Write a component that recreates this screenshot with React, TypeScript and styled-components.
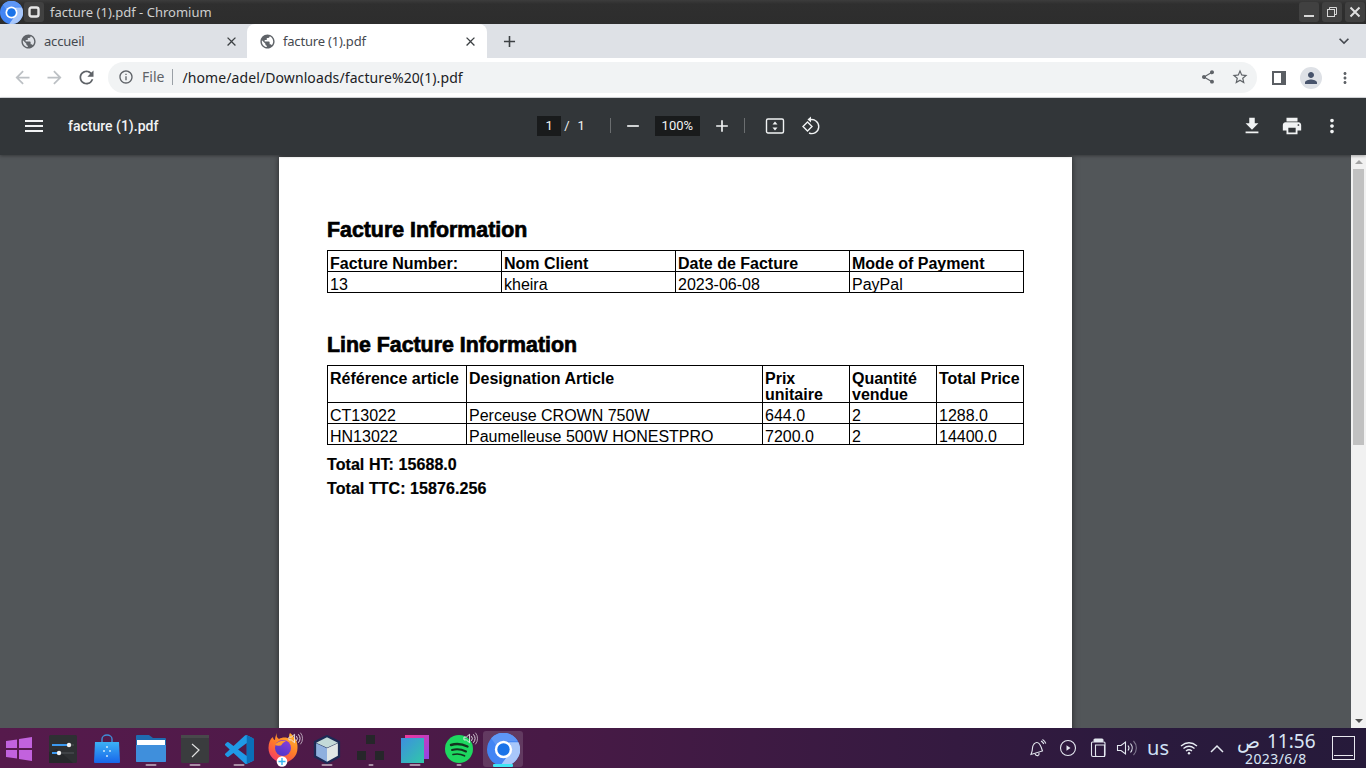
import React from "react";
import styled, { createGlobalStyle } from "styled-components";
import {
  MdAdd,
  MdArrowBack,
  MdArrowForward,
  MdClose,
  MdExpandMore,
  MdFileDownload,
  MdInfoOutline,
  MdMenu,
  MdMoreVert,
  MdPerson,
  MdPrint,
  MdPublic,
  MdRefresh,
  MdRemove,
  MdShare,
  MdStarBorder,
} from "react-icons/md";

const GlobalStyle = createGlobalStyle`
  html, body {
    margin: 0;
    padding: 0;
    overflow: hidden;
  }
  body {
    font-family: "Noto Sans", sans-serif;
  }
`;

const Screen = styled.div`
  width: 1366px;
  height: 768px;
  display: flex;
  flex-direction: column;
  overflow: hidden;
`;

/* window title bar */
const TitleBar = styled.div`
  height: 24px;
  flex: none;
  display: flex;
  align-items: center;
  background: linear-gradient(#3c3c3c 0, #2f2f2f 4px, #2d2d2d 100%);
  color: #cfcfcf;
  font-size: 13px;
`;

const TitleAppIcon = styled.div`
  width: 23px;
  height: 24px;
  margin-right: 1px;
  display: flex;
  align-items: center;
  justify-content: center;
`;

const TitleSquareButton = styled.div`
  width: 20px;
  height: 20px;
  margin-right: 6px;
  border-radius: 3px;
  background: #414141;
  display: flex;
  align-items: center;
  justify-content: center;
`;

const TitleText = styled.span`
  flex: 1;
`;

const WindowButtons = styled.div`
  display: flex;
  gap: 3px;
  margin-right: 1px;
`;

const WindowButton = styled.div`
  width: 20px;
  height: 20px;
  border-radius: 3px;
  background: #414141;
  display: flex;
  align-items: center;
  justify-content: center;
`;

/* tabs */
const TabStrip = styled.div`
  height: 34px;
  flex: none;
  display: flex;
  align-items: stretch;
  background: #dee1e6;
  padding-left: 8px;
`;

const Tab = styled.div<{ $active?: boolean }>`
  width: 240px;
  margin-right: ${(p) => (p.$active ? "0" : "-1px")};
  padding: 0 9px 0 12px;
  box-sizing: border-box;
  display: flex;
  align-items: center;
  gap: 7px;
  border-radius: 8px 8px 0 0;
  background: ${(p) => (p.$active ? "#fff" : "transparent")};
  color: #45494f;
  font-size: 13px;
  letter-spacing: -0.2px;
  svg {
    flex: none;
  }
`;

const TabLabel = styled.span`
  flex: 1;
`;

const NewTab = styled.div`
  width: 44px;
  display: flex;
  align-items: center;
  justify-content: center;
  color: #3c4043;
`;

const TabStripEnd = styled.div`
  margin-left: auto;
  width: 44px;
  display: flex;
  align-items: center;
  justify-content: center;
  color: #45494f;
`;

/* address bar */
const NavBar = styled.div`
  height: 40px;
  flex: none;
  box-sizing: border-box;
  background: #fff;
  border-bottom: 1px solid #dadce0;
  padding: 4px 12px 4px 6px;
  display: flex;
  align-items: flex-start;
`;

const NavButton = styled.div<{ $dim?: boolean }>`
  width: 32px;
  height: 31px;
  display: flex;
  align-items: center;
  justify-content: center;
  color: ${(p) => (p.$dim ? "#bcc0c4" : "#5f6368")};
`;

const Omnibox = styled.div`
  flex: 1;
  height: 31px;
  box-sizing: border-box;
  margin-left: 6px;
  padding: 0 8px 1px 10px;
  display: flex;
  align-items: center;
  background: #f1f3f4;
  border-radius: 16px;
  color: #5f6368;
  font-size: 14px;
`;

const SecurityLabel = styled.span`
  margin-left: 8px;
  padding-right: 8px;
  line-height: 16px;
  border-right: 1px solid #9aa0a6;
`;

const AddressText = styled.span`
  flex: 1;
  margin-left: 9px;
  color: #202124;
  letter-spacing: 0.1px;
`;

const OmniIcons = styled.div`
  display: flex;
  align-items: center;
  gap: 15px;
  color: #5f6368;
`;

const NavRight = styled.div`
  height: 31px;
  display: flex;
  align-items: center;
  margin-left: 15px;
  gap: 14px;
  color: #5f6368;
`;

const SidePanelIcon = styled.div`
  width: 14px;
  height: 14px;
  box-sizing: border-box;
  border: 2px solid #5a5e63;
  border-right-width: 5px;
`;

const Avatar = styled.div`
  width: 22px;
  height: 22px;
  border-radius: 50%;
  background: #dee1e6;
  color: #47536b;
  display: flex;
  align-items: center;
  justify-content: center;
`;

/* pdf viewer */
const PdfToolbar = styled.div`
  height: 57px;
  flex: none;
  box-sizing: border-box;
  padding-bottom: 2px;
  background: #323639;
  display: grid;
  grid-template-columns: 1fr auto 1fr;
  align-items: center;
  color: #f1f3f4;
  position: relative;
  z-index: 2;
  box-shadow: 0 1px 3px rgba(0, 0, 0, 0.35);
`;

const PdfLeft = styled.div`
  display: flex;
  align-items: center;
  padding-left: 22px;
`;

const PdfTitle = styled.span`
  margin-left: 22px;
  font-family: "Roboto", sans-serif;
  font-size: 14px;
  font-weight: 500;
`;

const PdfCenter = styled.div`
  display: flex;
  align-items: center;
  margin-right: 8px;
  font-family: "Roboto", sans-serif;
  font-size: 13px;
`;

const NumberBox = styled.div<{ $wide?: boolean }>`
  width: ${(p) => (p.$wide ? "45px" : "24px")};
  height: 20px;
  background: #191b1c;
  display: flex;
  align-items: center;
  justify-content: center;
`;

const Separator = styled.div<{ $gap?: number }>`
  width: 1px;
  height: 15px;
  margin-left: ${(p) => p.$gap || 0}px;
  background: #6b6e70;
`;

const PageCount = styled.span`
  display: flex;
  gap: 4px;
  margin-left: 3px;
  span + span {
    margin-left: 4px;
  }
`;

const ZoomOut = styled(MdRemove)`
  margin: 0 12px;
`;

const ZoomIn = styled(MdAdd)`
  margin: 0 12px;
`;

const FitButton = styled.span`
  display: flex;
  margin: 0 16px 0 20px;
`;

const PdfRight = styled.div`
  display: flex;
  align-items: center;
  justify-content: flex-end;
  gap: 18px;
  padding-right: 23px;
`;

const Viewer = styled.div`
  flex: 1;
  min-height: 0;
  display: flex;
  background: #525659;
`;

const PageArea = styled.div`
  flex: 1;
  display: flex;
  justify-content: center;
  padding-top: 2px;
  overflow: hidden;
`;

const Page = styled.div`
  width: 793px;
  height: 800px;
  box-sizing: border-box;
  padding: 60px 48px 0;
  background: #fff;
  box-shadow: 0 0 6px rgba(0, 0, 0, 0.55);
  color: #000;
  font-family: "Liberation Sans", Arial, sans-serif;
`;

const Heading = styled.h2`
  margin: 0 0 7px;
  font-size: 21.33px;
  line-height: 26px;
  font-weight: 700;
  -webkit-text-stroke: 0.7px #000;
`;

const DataTable = styled.table`
  width: 696px;
  table-layout: fixed;
  border-collapse: collapse;
  font-size: 16px;
  line-height: 16px;
  margin-bottom: 39px;
`;

const HeadCell = styled.th<{ $w: number }>`
  width: ${(p) => p.$w}px;
  box-sizing: border-box;
  border: 1px solid #000;
  padding: 5px 2px 0;
  text-align: left;
  vertical-align: top;
  font-weight: 700;
`;

const BodyCell = styled.td`
  border: 1px solid #000;
  padding: 5px 2px 0;
  vertical-align: top;
`;

/* keeps the rows at 21px while the text sits low in the cell */
const CellText = styled.div`
  margin-bottom: -1px;
`;

const TotalLine = styled.p`
  margin: 0;
  font-size: 16px;
  line-height: 24px;
  font-weight: 700;
  letter-spacing: 0.07px;
  -webkit-text-stroke: 0.2px #000;
`;

const Totals = styled.div`
  margin-top: -31px;
`;

const Scrollbar = styled.div`
  width: 15px;
  flex: none;
  background: #f1f1f1;
  display: flex;
  flex-direction: column;
  align-items: center;
  position: relative;
  z-index: 1;
`;

const ScrollArrow = styled.div<{ $down?: boolean }>`
  height: 14px;
  flex: none;
  display: flex;
  align-items: center;
  justify-content: center;
  &::before {
    content: "";
    border-left: 4px solid transparent;
    border-right: 4px solid transparent;
    ${(p) =>
      p.$down ? "border-top: 4px solid #505050;" : "border-bottom: 4px solid #a3a3a3;"}
  }
`;

const ScrollThumb = styled.div`
  width: 11px;
  height: 276px;
  background: #c1c1c1;
`;

const ScrollTrack = styled.div`
  flex: 1;
`;

/* taskbar */
const Taskbar = styled.div`
  height: 40px;
  flex: none;
  display: flex;
  align-items: center;
  background: linear-gradient(90deg, #561a4c 0%, #481a46 40%, #2a1a3d 85%, #261a3a 100%);
  color: #e6e6ef;
`;

const Launcher = styled.div`
  display: flex;
  align-items: center;
  height: 100%;
  margin-left: -3px;
  flex: 1;
`;

const Slot = styled.div<{ $active?: boolean }>`
  width: ${(p) => (p.$active ? "40px" : "44px")};
  height: 36px;
  margin: ${(p) => (p.$active ? "2px 2px 0" : "2px 0 0")};
  box-sizing: border-box;
  flex: none;
  position: relative;
  display: flex;
  align-items: center;
  justify-content: center;
  background: ${(p) => (p.$active ? "rgba(255,255,255,0.14)" : "transparent")};
  border-radius: 3px;
`;

const RunDot = styled.span<{ $active?: boolean; $w?: number }>`
  position: absolute;
  left: 50%;
  bottom: ${(p) => (p.$active ? "0" : "1px")};
  width: ${(p) => (p.$active ? 20 : p.$w || 11)}px;
  height: ${(p) => (p.$active ? 3 : 2)}px;
  transform: translateX(-50%);
  background: ${(p) => (p.$active ? "#3fe4f2" : "#a98ea6")};
  border-radius: 1px;
`;

const SoundBadge = styled.span<{ $right: number }>`
  position: absolute;
  top: 0;
  right: ${(p) => p.$right}px;
  display: flex;
`;

const Tray = styled.div`
  display: flex;
  align-items: center;
  height: 100%;
`;

const TrayItem = styled.div<{ $w: number }>`
  width: ${(p) => p.$w}px;
  display: flex;
  justify-content: center;
  align-items: center;
`;

const LayoutLabel = styled.span`
  font-size: 20px;
  line-height: 20px;
  color: #cfe0f5;
`;

const Clock = styled.div`
  width: 92px;
  margin-left: 2px;
  color: #d9e6f5;
`;

const ClockRow = styled.div`
  display: flex;
  align-items: flex-start;
  height: 21px;
  padding-left: 5px;
`;

const ClockSuffix = styled.span`
  width: 30px;
  font-size: 19px;
  line-height: 21px;
`;

const ClockTime = styled.span`
  font-size: 19px;
  line-height: 20px;
`;

const ClockDate = styled.div`
  font-size: 14px;
  line-height: 14px;
  letter-spacing: 0.4px;
  padding-left: 13px;
`;

const ShowDesktop = styled.div`
  width: 23px;
  height: 24px;
  box-sizing: border-box;
  margin: 0 11px 0 8px;
  border: 1px solid #e8e8ee;
  position: relative;
  &::after {
    content: "";
    position: absolute;
    left: 1px;
    right: 1px;
    bottom: 3px;
    height: 1px;
    background: #e8e8ee;
  }
`;

const ChromiumIcon = ({ size }: { size: number }) => (
  <svg width={size} height={size} viewBox="0 0 32 32">
    <circle cx="16" cy="16" r="16" fill="#4285f4" />
    <path d="M16 8 H30 A16 16 0 0 0 4 5 L9 12 A8 8 0 0 1 16 8Z" fill="#5e97f6" />
    <path d="M24 16 A8 8 0 0 0 21 9 H30.5 A16 16 0 0 1 13 31.7 L20 22 A8 8 0 0 0 24 16Z" fill="#a8c7fa" />
    <circle cx="16" cy="16" r="8.4" fill="#fff" />
    <circle cx="16" cy="16" r="6" fill="#1a73e8" />
  </svg>
);

const SoundWaves = () => (
  <svg width="15" height="15" viewBox="0 0 16 16" fill="none" stroke="#e8e4ea" strokeWidth="1">
    <path d="M1 6.5 H3.5 L7 3.5 V12.5 L3.5 9.5 H1Z" />
    <path d="M9 5.5 A4 4 0 0 1 9 10.5" />
    <path d="M11 3.5 A7 7 0 0 1 11 12.5" />
    <path d="M13.2 1.8 A9.5 9.5 0 0 1 13.2 14.2" opacity="0.7" />
  </svg>
);

const WindowsIcon = () => (
  <svg width="28" height="26" viewBox="0 0 28 26" fill="#c262de">
    <polygon points="1,5 12,3.5 12,12 1,12" />
    <polygon points="14,3 27,1 27,12 14,12" />
    <polygon points="1,14 12,14 12,22.5 1,21" />
    <polygon points="14,14 27,14 27,25 14,23" />
  </svg>
);

const SlidersIcon = () => (
  <svg width="28" height="28" viewBox="0 0 28 28">
    <rect width="28" height="28" rx="1.5" fill="#2e3033" />
    <polygon points="0,28 0,17 8,14 24,28" fill="#26282b" />
    <rect x="3" y="9" width="22" height="2" fill="#3f4246" />
    <rect x="3" y="9" width="17" height="2" fill="#3b99f0" />
    <circle cx="20" cy="10" r="2.2" fill="#f0f0f0" />
    <rect x="3" y="17" width="22" height="2" fill="#3f4246" />
    <rect x="3" y="17" width="8" height="2" fill="#3b99f0" />
    <circle cx="10" cy="18" r="2.2" fill="#f0f0f0" />
  </svg>
);

const StoreIcon = () => (
  <svg width="28" height="30" viewBox="0 0 28 30">
    <defs>
      <linearGradient id="storeBlue" x1="0" y1="0" x2="0" y2="1">
        <stop offset="0" stopColor="#3cb0f5" />
        <stop offset="1" stopColor="#1766ea" />
      </linearGradient>
    </defs>
    <path d="M9 8 V5 A5 4 0 0 1 19 5 V8" fill="none" stroke="#3f8fd8" strokeWidth="1.4" />
    <path d="M2 8 H26 L27 28 Q27 29 26 29 H2 Q1 29 1 28Z" fill="url(#storeBlue)" />
    <g fill="#cfeafe">
      <circle cx="14" cy="13" r="1" />
      <circle cx="11" cy="17" r="1" />
      <circle cx="17" cy="17" r="0.9" />
      <circle cx="14" cy="22" r="1" />
    </g>
  </svg>
);

const FolderIcon = () => (
  <svg width="30" height="28" viewBox="0 0 30 28">
    <path d="M0 1 Q0 0 1 0 H13 L17 3 H29 Q30 3 30 4 V26 Q30 27 29 27 H1 Q0 27 0 26Z" fill="#1e6bb0" />
    <rect x="1" y="5" width="28" height="5" fill="#fff" />
    <path d="M0 10 H30 V26 Q30 27 29 27 H1 Q0 27 0 26Z" fill="#3f8fdc" />
  </svg>
);

const TerminalIcon = () => (
  <svg width="28" height="28" viewBox="0 0 28 28">
    <rect width="28" height="28" rx="1.5" fill="#3a3c3e" />
    <rect width="28" height="3" fill="#48494b" />
    <polyline points="11,9 18,15 11,22" fill="none" stroke="#dfe0e0" strokeWidth="1.2" />
  </svg>
);

const VsCodeIcon = () => (
  <svg width="29" height="29" viewBox="0 0 24 24">
    <path
      d="M23.15 2.59 18.2.2a1.5 1.5 0 0 0-1.71.29L7.04 9.13 2.92 6a1 1 0 0 0-1.27.06L.33 7.26a1 1 0 0 0 0 1.48L3.9 12 .33 15.26a1 1 0 0 0 0 1.48l1.32 1.2a1 1 0 0 0 1.27.06l4.12-3.13 9.45 8.64a1.5 1.5 0 0 0 1.71.29l4.95-2.38A1.5 1.5 0 0 0 24 20.06V3.94a1.5 1.5 0 0 0-.85-1.35zM18 17.45 10.83 12 18 6.55z"
      fill="#1f9ae6"
    />
    <path d="M18 .3 23.15 2.6A1.5 1.5 0 0 1 24 3.94v16.12a1.5 1.5 0 0 1-.85 1.35L18 23.8Z" fill="#0a6fb8" />
  </svg>
);

const FirefoxIcon = () => (
  <svg width="30" height="36" viewBox="0 0 30 36">
    <defs>
      <linearGradient id="foxOrange" x1="0.8" y1="0" x2="0.2" y2="1">
        <stop offset="0" stopColor="#ffb52e" />
        <stop offset="0.5" stopColor="#ff7a2a" />
        <stop offset="1" stopColor="#f5356a" />
      </linearGradient>
      <linearGradient id="foxPurple" x1="0.8" y1="0" x2="0.2" y2="1">
        <stop offset="0" stopColor="#8a3fd8" />
        <stop offset="1" stopColor="#4a35c8" />
      </linearGradient>
    </defs>
    <path
      d="M9 2 C8 5 9 7 11 8 C14 6 19 6 22 8 C20 5 22 2 22 2 C27 6 30 11 29.5 17 A14.5 14.5 0 0 1 0.5 17 C0.5 12 2 8 5 6 C5 8 6 9 7 9 C7 6 8 4 9 2Z"
      fill="url(#foxOrange)"
    />
    <circle cx="15" cy="17" r="8" fill="url(#foxPurple)" />
    <path d="M7 14 Q11 9 18 10 Q14 12 13 14.5 Q9 15 7 14Z" fill="#ff9a30" />
    <circle cx="14" cy="30.5" r="5.3" fill="#fff" />
    <path d="M14 27 V34 M10.5 30.5 H17.5" stroke="#35b5f0" strokeWidth="1.4" />
  </svg>
);

const BoxIcon = () => (
  <svg width="28" height="29" viewBox="0 0 30 32">
    <polygon points="15,1 28.5,7.5 28.5,24 15,31 1.5,24 1.5,7.5" fill="#1d2a55" stroke="#1d2a55" strokeWidth="2" strokeLinejoin="round" />
    <polygon points="15,2.5 27,8.5 15,14 3,8.5" fill="#c3dad8" />
    <polygon points="3,9 15,14.5 15,29.5 3,23" fill="#8fb0de" />
    <polygon points="27,9 27,23 15,29.5 15,14.5" fill="#e0e7e6" />
  </svg>
);

const DotsIcon = () => (
  <svg width="28" height="28" viewBox="0 0 28 28" fill="#26262a">
    <rect x="9" y="0" width="9" height="9" />
    <rect x="0" y="16" width="9" height="9" />
    <rect x="18" y="16" width="9" height="9" />
  </svg>
);

const SquaresIcon = () => (
  <svg width="28" height="28" viewBox="0 0 28 28">
    <defs>
      <linearGradient id="backSq" x1="0" y1="0" x2="1" y2="1">
        <stop offset="0" stopColor="#f0369a" />
        <stop offset="1" stopColor="#8f46e8" />
      </linearGradient>
      <linearGradient id="frontSq" x1="0" y1="0" x2="1" y2="1">
        <stop offset="0" stopColor="#3d8fe0" />
        <stop offset="1" stopColor="#30c8a8" />
      </linearGradient>
    </defs>
    <rect x="4" y="0" width="24" height="24" fill="url(#backSq)" />
    <rect x="0" y="3" width="23" height="25" fill="url(#frontSq)" />
  </svg>
);

const SpotifyIcon = () => (
  <svg width="28" height="28" viewBox="0 0 28 28">
    <circle cx="14" cy="14" r="14" fill="#1ed760" />
    <g fill="none" stroke="#14321f" strokeLinecap="round">
      <path d="M6 10 Q14 7.5 22.5 11.5" strokeWidth="2.4" />
      <path d="M7 15 Q14 13 21 16.5" strokeWidth="2" />
      <path d="M8 19.5 Q14 18 19.5 20.8" strokeWidth="1.7" />
    </g>
  </svg>
);

const BellIcon = () => (
  <svg width="20" height="20" viewBox="0 0 20 20" fill="none" stroke="#e4e8f0" strokeWidth="1.1">
    <path d="M7 6 Q10 3 12.5 6 Q14.5 9 15.5 13 L4 16.5 Q5.5 13 5.5 10 Q5.5 8 7 6Z" />
    <path d="M8 15.8 Q9 18 11 17.6 Q12.4 17 12 14.8" />
    <path d="M14 3 Q16 4 16.8 6" />
    <path d="M15.5 1.5 Q18 3 18.8 5.5" />
  </svg>
);

const PlayIcon = () => (
  <svg width="18" height="18" viewBox="0 0 18 18" fill="none" stroke="#e4e8f0" strokeWidth="1.1">
    <circle cx="9" cy="9" r="7.5" />
    <polygon points="7.5,6.2 11.5,9 7.5,11.8" fill="#e4e8f0" stroke="none" />
  </svg>
);

const ClipboardIcon = () => (
  <svg width="16" height="20" viewBox="0 0 16 20" fill="none" stroke="#e4e8f0" strokeWidth="1.1">
    <rect x="4" y="1" width="9" height="2.5" rx="1" fill="#e4e8f0" />
    <path d="M1.5 17 V5 Q1.5 4 2.5 4 H14 Q15 4 15 5 V17 Q15 18.5 13.5 18.5 H3 Q1.5 18.5 1.5 17Z" />
    <path d="M5.5 7 H14.5 V18.5 H7 Q5.5 18.5 5.5 17Z" />
  </svg>
);

const VolumeIcon = () => (
  <svg width="22" height="18" viewBox="0 0 22 18" fill="none" stroke="#e4e8f0" strokeWidth="1.1">
    <path d="M1.5 6.5 H5 L9.5 3 V15 L5 11.5 H1.5Z" />
    <path d="M12 6.5 A4 4 0 0 1 12 11.5" />
    <path d="M14.5 4.5 A7 7 0 0 1 14.5 13.5" />
    <path d="M17.5 2 A10 10 0 0 1 17.5 16" opacity="0.45" />
  </svg>
);

const WifiIcon = () => (
  <svg width="18" height="14" viewBox="0 0 18 14" fill="none" stroke="#e8ecf4" strokeWidth="1.3">
    <path d="M1 5 Q9 -1.5 17 5" />
    <path d="M3.5 7.5 Q9 3 14.5 7.5" />
    <path d="M6 10 Q9 7.5 12 10" />
    <circle cx="9" cy="12.3" r="1.2" fill="#e8ecf4" stroke="none" />
  </svg>
);

const ChevronUpIcon = () => (
  <svg width="14" height="9" viewBox="0 0 14 9" fill="none" stroke="#e4e8f0" strokeWidth="1.5">
    <polyline points="1,8 7,2 13,8" />
  </svg>
);

const FitPageIcon = () => (
  <svg width="20" height="20" viewBox="0 0 20 20" fill="none">
    <rect x="1.5" y="3" width="17" height="14" rx="1.5" stroke="#f1f3f4" strokeWidth="1.4" />
    <polygon points="10,5.5 12.5,8.5 7.5,8.5" fill="#f1f3f4" />
    <polygon points="10,14.5 12.5,11.5 7.5,11.5" fill="#f1f3f4" />
  </svg>
);

const RotateIcon = () => (
  <svg width="20" height="20" viewBox="0 0 20 20" fill="none" stroke="#f1f3f4" strokeWidth="1.4">
    <polygon points="6.5,6 11,10.5 6.5,15 2,10.5" />
    <path d="M9 3.8 A7 7 0 1 1 8 17" />
    <polygon points="10,0.5 10,6.5 6.5,3.6" fill="#f1f3f4" stroke="none" />
  </svg>
);

const factureHead: [string, number][] = [
  ["Facture Number:", 174],
  ["Nom Client", 174],
  ["Date de Facture", 174],
  ["Mode of Payment", 174],
];

const facture = [["13", "kheira", "2023-06-08", "PayPal"]];

const linesHead: [string, number][] = [
  ["Référence article", 139],
  ["Designation Article", 296],
  ["Prix unitaire", 87],
  ["Quantité vendue", 87],
  ["Total Price", 87],
];

const lines = [
  ["CT13022", "Perceuse CROWN 750W", "644.0", "2", "1288.0"],
  ["HN13022", "Paumelleuse 500W HONESTPRO", "7200.0", "2", "14400.0"],
];

const InfoTable = ({ head, rows }: { head: [string, number][]; rows: string[][] }) => (
  <DataTable>
    <thead>
      <tr>
        {head.map(([label, w]) => (
          <HeadCell key={label} $w={w}>
            <CellText>{label}</CellText>
          </HeadCell>
        ))}
      </tr>
    </thead>
    <tbody>
      {rows.map((row) => (
        <tr key={row[0]}>
          {row.map((c, i) => (
            <BodyCell key={i}>
              <CellText>{c}</CellText>
            </BodyCell>
          ))}
        </tr>
      ))}
    </tbody>
  </DataTable>
);

const App = () => {
  return (
    <Screen>
      <GlobalStyle />
      <TitleBar>
        <TitleAppIcon>
          <ChromiumIcon size={23} />
        </TitleAppIcon>
        <TitleSquareButton>
          <svg width="14" height="14" viewBox="0 0 14 14" fill="none" stroke="#e6e6e6" strokeWidth="2.4">
            <rect x="2.5" y="2.5" width="9" height="9" rx="2" />
          </svg>
        </TitleSquareButton>
        <TitleText>facture (1).pdf - Chromium</TitleText>
        <WindowButtons>
          <WindowButton>
            <svg width="12" height="12" viewBox="0 0 12 12">
              <rect x="1" y="9" width="10" height="2" fill="#d8d8d8" />
            </svg>
          </WindowButton>
          <WindowButton>
            <svg width="12" height="12" viewBox="0 0 12 12" fill="none" stroke="#d8d8d8">
              <rect x="1.5" y="3.5" width="7" height="7" />
              <path d="M3.5 3 V1.5 H10.5 V8.5 H9" />
            </svg>
          </WindowButton>
          <WindowButton>
            <svg width="12" height="12" viewBox="0 0 12 12" stroke="#e0e0e0" strokeWidth="2">
              <path d="M1.5 1.5 L10.5 10.5 M10.5 1.5 L1.5 10.5" />
            </svg>
          </WindowButton>
        </WindowButtons>
      </TitleBar>

      <TabStrip>
        <Tab>
          <MdPublic size={17} color="#5f6368" />
          <TabLabel>accueil</TabLabel>
          <MdClose size={15} color="#3c4043" />
        </Tab>
        <Tab $active>
          <MdPublic size={17} color="#5f6368" />
          <TabLabel>facture (1).pdf</TabLabel>
          <MdClose size={15} color="#3c4043" />
        </Tab>
        <NewTab>
          <MdAdd size={19} />
        </NewTab>
        <TabStripEnd>
          <MdExpandMore size={20} />
        </TabStripEnd>
      </TabStrip>

      <NavBar>
        <NavButton $dim>
          <MdArrowBack size={21} />
        </NavButton>
        <NavButton $dim>
          <MdArrowForward size={21} />
        </NavButton>
        <NavButton>
          <MdRefresh size={21} />
        </NavButton>
        <Omnibox>
          <MdInfoOutline size={16} />
          <SecurityLabel>File</SecurityLabel>
          <AddressText>/home/adel/Downloads/facture%20(1).pdf</AddressText>
          <OmniIcons>
            <MdShare size={16} />
            <MdStarBorder size={18} />
          </OmniIcons>
        </Omnibox>
        <NavRight>
          <SidePanelIcon />
          <Avatar>
            <MdPerson size={18} />
          </Avatar>
          <MdMoreVert size={18} />
        </NavRight>
      </NavBar>

      <PdfToolbar>
        <PdfLeft>
          <MdMenu size={24} />
          <PdfTitle>facture (1).pdf</PdfTitle>
        </PdfLeft>
        <PdfCenter>
          <NumberBox>1</NumberBox>
          <PageCount>
            <span>/</span>
            <span>1</span>
          </PageCount>
          <Separator $gap={25} />
          <ZoomOut size={20} />
          <NumberBox $wide>100%</NumberBox>
          <ZoomIn size={20} />
          <Separator />
          <FitButton>
            <FitPageIcon />
          </FitButton>
          <RotateIcon />
        </PdfCenter>
        <PdfRight>
          <MdFileDownload size={22} />
          <MdPrint size={22} />
          <MdMoreVert size={22} />
        </PdfRight>
      </PdfToolbar>

      <Viewer>
        <PageArea>
          <Page>
            <Heading>Facture Information</Heading>
            <InfoTable head={factureHead} rows={facture} />

            <Heading>Line Facture Information</Heading>
            <InfoTable head={linesHead} rows={lines} />

            <Totals>
              <TotalLine>Total HT: 15688.0</TotalLine>
              <TotalLine>Total TTC: 15876.256</TotalLine>
            </Totals>
          </Page>
        </PageArea>
        <Scrollbar>
          <ScrollArrow />
          <ScrollThumb />
          <ScrollTrack />
          <ScrollArrow $down />
        </Scrollbar>
      </Viewer>

      <Taskbar>
        <Launcher>
          <Slot>
            <WindowsIcon />
          </Slot>
          <Slot>
            <SlidersIcon />
          </Slot>
          <Slot>
            <StoreIcon />
          </Slot>
          <Slot>
            <FolderIcon />
            <RunDot />
          </Slot>
          <Slot>
            <TerminalIcon />
            <RunDot />
          </Slot>
          <Slot>
            <VsCodeIcon />
            <RunDot />
          </Slot>
          <Slot>
            <FirefoxIcon />
            <SoundBadge $right={2}>
              <SoundWaves />
            </SoundBadge>
          </Slot>
          <Slot>
            <BoxIcon />
            <RunDot />
          </Slot>
          <Slot>
            <DotsIcon />
            <RunDot $w={5} />
          </Slot>
          <Slot>
            <SquaresIcon />
            <RunDot />
          </Slot>
          <Slot>
            <SpotifyIcon />
            <RunDot $w={5} />
            <SoundBadge $right={3}>
              <SoundWaves />
            </SoundBadge>
          </Slot>
          <Slot $active>
            <ChromiumIcon size={33} />
            <RunDot $active />
          </Slot>
        </Launcher>
        <Tray>
          <TrayItem $w={30}>
            <BellIcon />
          </TrayItem>
          <TrayItem $w={32}>
            <PlayIcon />
          </TrayItem>
          <TrayItem $w={28}>
            <ClipboardIcon />
          </TrayItem>
          <TrayItem $w={30}>
            <VolumeIcon />
          </TrayItem>
          <TrayItem $w={32}>
            <LayoutLabel>us</LayoutLabel>
          </TrayItem>
          <TrayItem $w={30}>
            <WifiIcon />
          </TrayItem>
          <TrayItem $w={26}>
            <ChevronUpIcon />
          </TrayItem>
          <Clock>
            <ClockRow>
              <ClockSuffix>ص</ClockSuffix>
              <ClockTime>11:56</ClockTime>
            </ClockRow>
            <ClockDate>2023/6/8</ClockDate>
          </Clock>
          <ShowDesktop />
        </Tray>
      </Taskbar>
    </Screen>
  );
};

export default App;
